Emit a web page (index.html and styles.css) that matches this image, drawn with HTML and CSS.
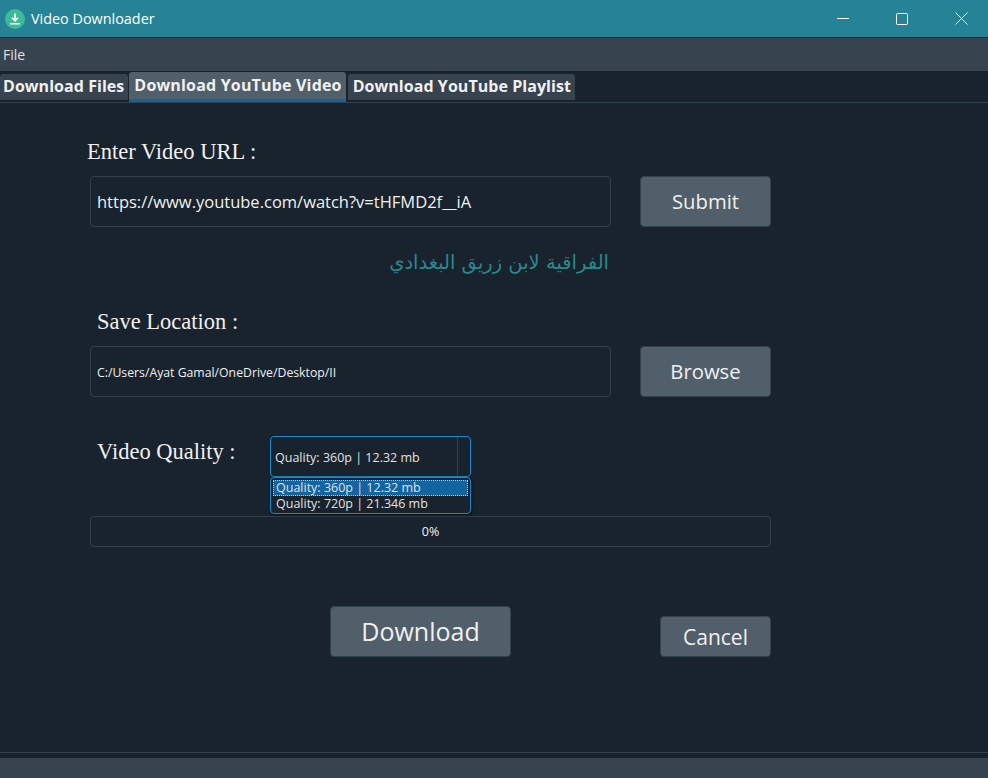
FILE: index.html
```html
<!DOCTYPE html>
<html lang="en">
<head>
    <meta charset="UTF-8">
    <meta name="viewport" content="width=device-width, initial-scale=1.0">
    <title>Video Downloader</title>
    <link rel="stylesheet" href="styles.css">
</head>
<body>
    <div class="window">
        <header class="titlebar">
            <svg class="app-icon" width="20" height="20" viewBox="0 0 20 20">
                <circle cx="10" cy="10" r="10" fill="#3dbb98"/>
                <path d="M10 4.5v7M7 8.8l3 3 3-3M5 14.8h10" fill="none" stroke="#fff" stroke-width="1.6"/>
            </svg>
            <span class="app-title">Video Downloader</span>
            <div class="window-controls">
                <svg width="12" height="12" viewBox="0 0 12 12"><path d="M0 5.5h12" stroke="#fff" fill="none"/></svg>
                <svg width="12" height="12" viewBox="0 0 12 12"><rect x="0.5" y="0.5" width="11" height="11" rx="1" stroke="#fff" fill="none"/></svg>
                <svg width="13" height="13" viewBox="0 0 13 13"><path d="M.5.5l12 12M12.5.5l-12 12" stroke="#fff" fill="none"/></svg>
            </div>
        </header>

        <nav class="menubar"><span>File</span></nav>

        <div class="tabs">
            <span class="tab first">Download Files</span>
            <span class="tab active">Download YouTube Video</span>
            <span class="tab">Download YouTube Playlist</span>
        </div>

        <main class="content">
            <label class="field-label url-label">Enter Video URL :</label>
            <div class="input-row">
                <div class="text-input url-input">https://www.youtube.com/watch?v=tHFMD2f__iA</div>
                <button class="btn side-btn">Submit</button>
            </div>
            <p class="video-title" dir="rtl" lang="ar">الفراقية لابن زريق البغدادي</p>

            <label class="field-label save-label">Save Location :</label>
            <div class="input-row">
                <div class="text-input path-input">C:/Users/Ayat Gamal/OneDrive/Desktop/II</div>
                <button class="btn side-btn">Browse</button>
            </div>

            <div class="quality-row">
                <label class="field-label quality-label">Video Quality :</label>
                <div class="combo">
                    <div class="combo-box">
                        <span class="combo-value">Quality: 360p | 12.32 mb</span>
                        <span class="combo-arrow"></span>
                    </div>
                    <ul class="combo-list">
                        <li class="selected">Quality: 360p | 12.32 mb</li>
                        <li>Quality: 720p | 21.346 mb</li>
                    </ul>
                </div>
            </div>

            <div class="progress">0%</div>

            <div class="actions">
                <button class="btn download-btn">Download</button>
                <button class="btn cancel-btn">Cancel</button>
            </div>
        </main>

        <footer class="statusbar"></footer>
    </div>
</body>
</html>
```

FILE: styles.css
```css
html, body {
    margin: 0;
    padding: 0;
    height: 100%;
    overflow: hidden;
}

body {
    font-family: "Open Sans", "Noto Sans", sans-serif;
    background-color: #19232d;
    color: #e0e1e3;
}

.window {
    display: flex;
    flex-direction: column;
    height: 778px;
}

.titlebar {
    display: flex;
    align-items: center;
    height: 37px;
    flex: none;
    padding-left: 5px;
    background-color: #268295;
    border-bottom: 1px solid #19232d;
    color: #fff;
}

.app-icon {
    margin-right: 6px;
}

.app-title {
    font-size: 14.4px;
}

.window-controls {
    display: flex;
    align-items: center;
    gap: 47px;
    margin-left: auto;
    margin-right: 20px;
}

.menubar {
    height: 33px;
    flex: none;
    display: flex;
    align-items: center;
    padding-left: 3px;
    background-color: #37434e;
    font-size: 14px;
}

.tabs {
    display: flex;
    align-items: flex-end;
    gap: 2px;
    height: 32px;
    flex: none;
    box-sizing: border-box;
    border-bottom: 1px solid #32414b;
    padding-bottom: 2px;
}

.tab {
    box-sizing: border-box;
    height: 26px;
    background-color: #37434e;
    color: #f0f0f0;
    font-size: 16px;
    font-weight: 700;
    line-height: 24px;
    padding: 0 4px 0 5px;
    border-radius: 3px 3px 0 0;
    white-space: nowrap;
    letter-spacing: 0.05px;
}

.tab.first {
    padding-left: 3px;
    margin-right: -1px;
}

.tab.active {
    height: 30px;
    margin-bottom: -2px;
    background-color: #505f69;
    line-height: 26px;
    border-bottom: 3px solid #1464a0;
    letter-spacing: 0.18px;
}

.content {
    flex: 1;
    padding-left: 90px;
    width: 681px;
}

.field-label {
    display: block;
    font-family: "Liberation Serif", serif;
    font-size: 22.5px;
    line-height: 24px;
    color: #f0f0f0;
}

.url-label {
    margin: 37px 0 12px -3px;
}

.save-label {
    margin: 36px 0 12px 7px;
}

.input-row {
    display: flex;
    justify-content: space-between;
    height: 51px;
}

.text-input {
    width: 521px;
    box-sizing: border-box;
    display: flex;
    align-items: center;
    padding-left: 6px;
    border: 1px solid #32414b;
    border-radius: 4px;
    color: #f0f0f0;
}

.url-input {
    font-size: 16.5px;
}

.path-input {
    padding-top: 2px;
    font-size: 12.25px;
}

.btn {
    box-sizing: border-box;
    padding: 0;
    font-family: inherit;
    color: #f0f0f0;
    background-color: #505f69;
    border: 1px solid #32414b;
    border-radius: 4px;
}

.side-btn {
    width: 131px;
    padding-bottom: 2px;
    font-size: 20.3px;
}

.video-title {
    width: 519px;
    margin: 25px 0 0 0;
    height: 22px;
    font-family: "DejaVu Sans", sans-serif;
    font-size: 19.5px;
    line-height: 22px;
    color: #28898f;
}

.quality-row {
    display: flex;
    margin-top: 39px;
    padding-left: 7px;
    height: 41px;
}

.quality-label {
    width: 173px;
    padding-top: 4px;
}

.combo {
    position: relative;
    width: 201px;
}

.combo-box {
    box-sizing: border-box;
    height: 41px;
    display: flex;
    border: 1px solid #148cd2;
    border-radius: 4px;
    font-size: 12.5px;
}

.combo-value {
    flex: 1;
    padding: 12px 0 0 4px;
}

.combo-arrow {
    width: 12px;
    border-left: 1px solid #32414b;
}

.combo-list {
    position: absolute;
    top: 41px;
    left: 0;
    right: 0;
    box-sizing: border-box;
    height: 37px;
    margin: 0;
    padding: 2px 2px;
    list-style: none;
    background-color: #19232d;
    border: 1px solid #148cd2;
    border-radius: 4px;
    box-shadow: 1px 1px 3px rgba(0, 0, 0, 0.6);
    font-size: 12.5px;
    line-height: 16px;
}

.combo-list li {
    padding-left: 3px;
}

.combo-list .selected {
    background-color: #1464a0;
    outline: 1px dotted #b9c4cc;
    outline-offset: -1px;
}

.progress {
    box-sizing: border-box;
    height: 31px;
    margin-top: 39px;
    line-height: 29px;
    text-align: center;
    font-size: 12.5px;
    border: 1px solid #32414b;
    border-radius: 4px;
    color: #f0f0f0;
}

.actions {
    display: flex;
    align-items: flex-end;
    margin-top: 59px;
    padding-left: 240px;
}

.download-btn {
    width: 181px;
    height: 51px;
    padding-bottom: 2px;
    font-size: 25px;
}

.cancel-btn {
    width: 111px;
    height: 41px;
    margin-left: auto;
    font-size: 21px;
}

.statusbar {
    height: 20px;
    flex: none;
    background-color: #37434e;
    box-shadow: 0 -5px 0 #19232d, 0 -6px 0 #32414b;
}
```
